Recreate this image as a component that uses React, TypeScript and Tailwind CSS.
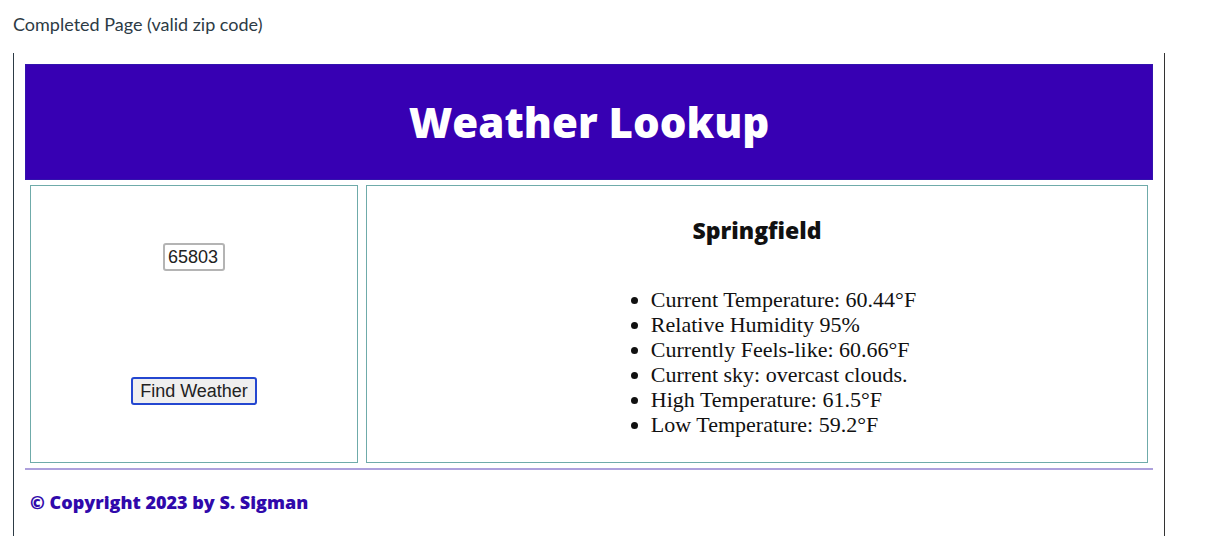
import { useState } from "react";

const readings = [
  "Current Temperature: 60.44°F",
  "Relative Humidity 95%",
  "Currently Feels-like: 60.66°F",
  "Current sky: overcast clouds.",
  "High Temperature: 61.5°F",
  "Low Temperature: 59.2°F",
];

export default function App() {
  const [zip, setZip] = useState("65803");

  return (
    <div className="flex min-h-screen flex-col bg-white pl-[13px] pr-[50px]">
      <p className="pt-3 pb-4 font-['Lato',sans-serif] text-[18px] leading-[25px] text-[#2d3b45]">
        Completed Page (valid zip code)
      </p>
      <main className="flex flex-1 flex-col border-x border-l-[#2d3b45] border-r-[#333333] px-[11px] pt-[11px]">
        <header className="flex h-[116px] items-center justify-center border border-[#3313ae] bg-[#3700b3]">
          <h1 className="font-['Open_Sans',sans-serif] text-[42px] leading-[56px] font-extrabold text-white">
            Weather Lookup
          </h1>
        </header>

        <div className="grid grid-cols-[328fr_782fr] gap-2 px-[5px] py-[5px]">
          <form
            className="flex flex-col items-center border border-[#6fabaa] pt-[57px] pb-[57px] font-['Liberation_Sans',sans-serif] text-[18px] text-[#222222]"
            onSubmit={(event) => event.preventDefault()}
          >
            <input
              type="text"
              aria-label="Zip code"
              value={zip}
              onChange={(event) => setZip(event.target.value)}
              className="h-7 w-[62px] rounded-[3px] border-2 border-[#b4b4b4] bg-white px-[3px] outline-none"
            />
            <button
              type="submit"
              className="mt-auto h-7 rounded-[3px] border-2 border-[#2447d0] bg-[#efefef] px-[7px] leading-6"
            >
              Find Weather
            </button>
          </form>

          <section className="flex h-[278px] flex-col items-center border border-[#6fabaa] pt-7 text-[#111111]">
            <h2 className="font-['Open_Sans',sans-serif] text-[23px] leading-8 font-extrabold">
              Springfield
            </h2>
            <ul className="mt-[41px] list-disc pl-[53px] font-['Liberation_Serif',serif] text-[22px] leading-[25px]">
              {readings.map((reading) => (
                <li key={reading}>{reading}</li>
              ))}
            </ul>
          </section>
        </div>

        <footer className="border-t-2 border-[#ada0dc] px-[5px] pt-5">
          <p className="font-['Open_Sans',sans-serif] text-[18px] leading-6 font-extrabold text-[#3009ab]">
            © Copyright 2023 by S. Sigman
          </p>
        </footer>
      </main>
    </div>
  );
}
